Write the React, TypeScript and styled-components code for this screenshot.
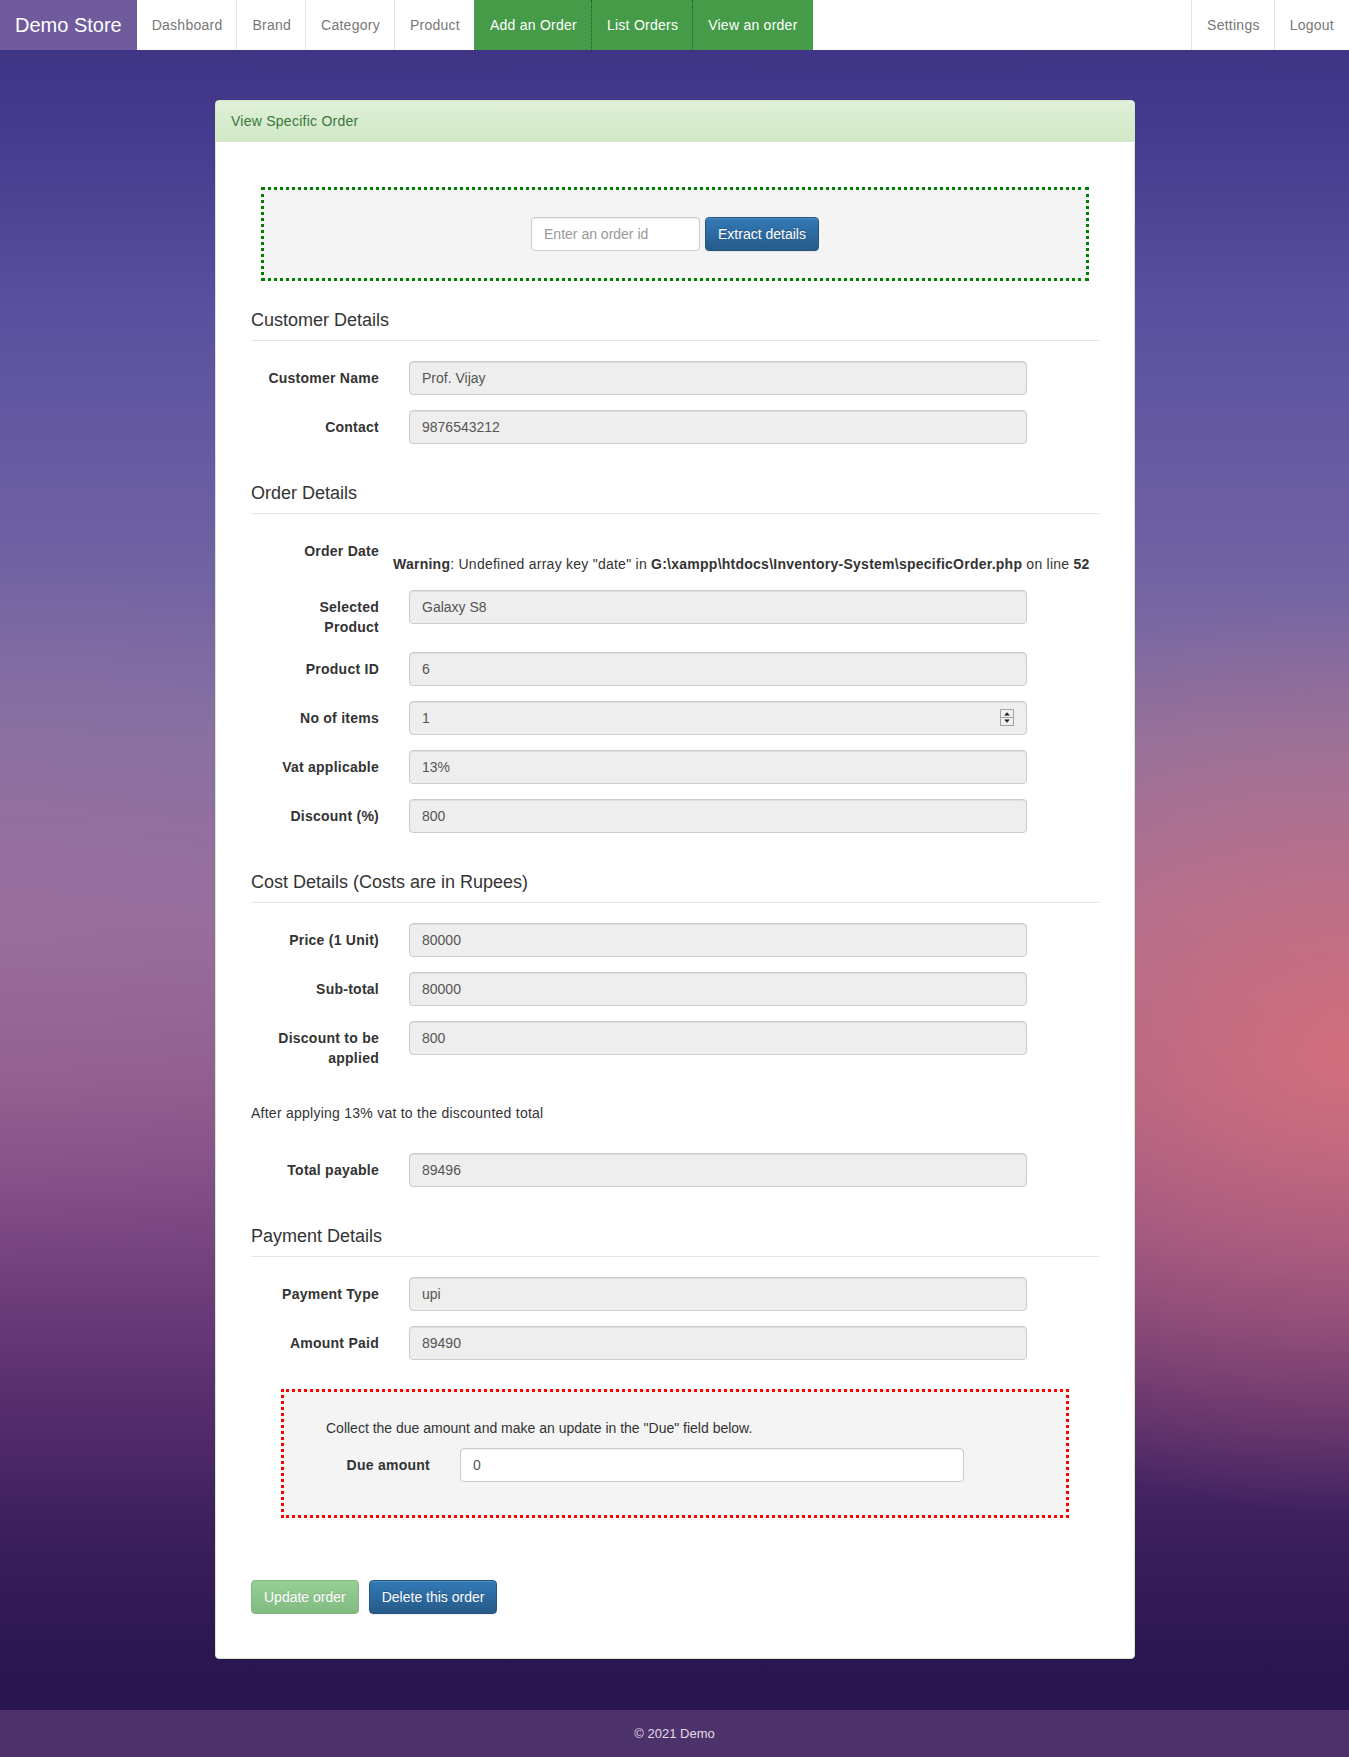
import React from "react";
import styled, { createGlobalStyle } from "styled-components";

const GlobalStyle = createGlobalStyle`
    * {
        box-sizing: border-box;
    }

    body {
        margin: 0;
        font-family: "Liberation Sans", Arial, Helvetica, sans-serif;
        font-size: 14px;
        line-height: 1.42857;
        letter-spacing: 0.25px;
        color: #333;
    }
`;

const Page = styled.div`
    min-height: 100vh;
    display: flex;
    flex-direction: column;
    background:
        radial-gradient(ellipse 48% 26% at 100% 60%, rgba(214, 112, 124, 0.95), rgba(214, 112, 124, 0) 100%),
        radial-gradient(ellipse 40% 20% at 0% 52%, rgba(160, 110, 160, 0.45), rgba(160, 110, 160, 0) 100%),
        linear-gradient(
            to bottom,
            #3b3080 0%,
            #463c8e 8%,
            #5a519f 18%,
            #6d5fa3 30%,
            #8571a2 42%,
            #946e9c 52%,
            #8e5a8c 62%,
            #7a4682 70%,
            #5a2f6e 79%,
            #3c1f5e 87%,
            #2a1650 95%,
            #281550 100%
        );
`;

const NavBar = styled.nav`
    display: flex;
    justify-content: space-between;
    height: 50px;
    background-color: #fff;
`;

const NavGroup = styled.ul`
    display: flex;
    list-style: none;
    margin: 0;
    padding: 0;
`;

const Brand = styled.a`
    display: block;
    padding: 13px 15px;
    height: 50px;
    font-size: 20px;
    line-height: 24px;
    letter-spacing: 0;
    color: #fff;
    background-color: #6e5a9c;
    text-decoration: none;
`;

const NavItem = styled.li<{ $active?: boolean; $sep?: "none" | "solid" | "dotted" }>`
    padding: 15px;
    line-height: 20px;
    font-size: 14px;
    color: ${(p) => (p.$active ? "#fff" : "#777")};
    background-color: ${(p) => (p.$active ? "#469b48" : "transparent")};
    border-left: 1px
        ${(p) =>
            p.$sep === "dotted"
                ? "dotted #1f5a22"
                : p.$sep === "solid"
                ? "solid #e3e3e3"
                : "solid transparent"};
    margin-left: -1px;
    cursor: pointer;
`;

const Main = styled.main`
    flex: 1;
    padding: 50px 0 51px;
`;

const Panel = styled.section`
    width: 920px;
    margin: 0 0 0 215px;
    background-color: #fff;
    border: 1px solid #d6e9c6;
    border-radius: 4px;
    box-shadow: 0 1px 2px rgba(0, 0, 0, 0.05);
`;

const PanelHeading = styled.div`
    padding: 10px 15px;
    line-height: 20px;
    color: #3c763d;
    background-image: linear-gradient(to bottom, #dff0d8 0%, #d0e9c6 100%);
    border-bottom: 1px solid #d6e9c6;
    border-radius: 3px 3px 0 0;
`;

const PanelBody = styled.div`
    padding: 45px 35px 44px;
`;

const SearchBox = styled.div`
    display: flex;
    justify-content: center;
    gap: 5px;
    margin: 0 10px;
    padding: 27px 0;
    background-color: #f4f4f4;
    border: 3px dotted #008000;
`;

const SearchInput = styled.input`
    width: 169px;
    height: 34px;
    padding: 6px 12px;
    font: inherit;
    color: #555;
    background-color: #fff;
    border: 1px solid #ccc;
    border-radius: 4px;
    box-shadow: inset 0 1px 1px rgba(0, 0, 0, 0.075);

    &::placeholder {
        color: #999;
    }
`;

const Button = styled.button<{ $variant: "primary" | "success" }>`
    height: 34px;
    padding: 6px 12px;
    font: inherit;
    line-height: 20px;
    color: #fff;
    border-radius: 4px;
    border: 1px solid ${(p) => (p.$variant === "primary" ? "#245580" : "#3e8f3e")};
    background-image: ${(p) =>
        p.$variant === "primary"
            ? "linear-gradient(to bottom, #337ab7 0%, #265a88 100%)"
            : "linear-gradient(to bottom, #5cb85c 0%, #419641 100%)"};
    box-shadow: inset 0 1px 0 rgba(255, 255, 255, 0.15), 0 1px 1px rgba(0, 0, 0, 0.075);
    text-shadow: 0 -1px 0 rgba(0, 0, 0, 0.2);
    cursor: pointer;

    &:disabled {
        opacity: 0.65;
        box-shadow: none;
        cursor: not-allowed;
    }
`;

const SectionTitle = styled.h4<{ $first?: boolean }>`
    margin: ${(p) => (p.$first ? "29px" : "39px")} 0 20px;
    padding-bottom: 10px;
    font-size: 18px;
    font-weight: normal;
    line-height: 20px;
    letter-spacing: 0;
    color: #333;
    border-bottom: 1px solid #e5e5e5;
`;

const FieldRow = styled.div`
    display: grid;
    grid-template-columns: 128px 618px;
    column-gap: 30px;
    align-items: start;
    margin-bottom: 15px;
`;

const FieldLabel = styled.label`
    padding: 7px 0 0 14px;
    font-weight: bold;
    text-align: right;
    line-height: 20px;
`;

const FieldBox = styled.div`
    position: relative;
`;

const FieldInput = styled.input<{ $plain?: boolean }>`
    display: block;
    width: 100%;
    height: 34px;
    padding: 6px 12px;
    font: inherit;
    line-height: 20px;
    color: #555;
    background-color: ${(p) => (p.$plain ? "#fff" : "#eee")};
    border: 1px solid #ccc;
    border-radius: 4px;
    box-shadow: inset 0 1px 1px rgba(0, 0, 0, 0.075);
    outline: none;
`;

const Spinner = styled.svg`
    position: absolute;
    top: 8px;
    right: 13px;
`;

const Warning = styled.div`
    margin-left: -16px;
    padding-bottom: 1px;
    white-space: nowrap;
    line-height: 20px;
`;

const Note = styled.p`
    margin: 35px 0 30px;
    line-height: 20px;
`;

const DueBox = styled.div`
    margin: 29px 30px 0;
    padding: 26px 0 33px 42px;
    background-color: #f4f4f4;
    border: 3px dotted #ff0000;
`;

const DueText = styled.p`
    margin: 0 0 10px;
    line-height: 20px;
    letter-spacing: 0;
`;

const DueRow = styled.div`
    display: grid;
    grid-template-columns: 104px 504px;
    column-gap: 30px;
    align-items: start;
`;

const Actions = styled.div`
    display: flex;
    gap: 10px;
    margin-top: 62px;
`;

const Footer = styled.footer`
    height: 48px;
    line-height: 48px;
    text-align: center;
    font-size: 13px;
    letter-spacing: 0;
    color: #e2dcea;
    background-color: #4e326b;
`;

type Field = { label: string; value: string; spinner?: boolean };

const customer: Field[] = [
    { label: "Customer Name", value: "Prof. Vijay" },
    { label: "Contact", value: "9876543212" },
];

const order: Field[] = [
    { label: "Selected Product", value: "Galaxy S8" },
    { label: "Product ID", value: "6" },
    { label: "No of items", value: "1", spinner: true },
    { label: "Vat applicable", value: "13%" },
    { label: "Discount (%)", value: "800" },
];

const cost: Field[] = [
    { label: "Price (1 Unit)", value: "80000" },
    { label: "Sub-total", value: "80000" },
    { label: "Discount to be applied", value: "800" },
];

const payment: Field[] = [
    { label: "Payment Type", value: "upi" },
    { label: "Amount Paid", value: "89490" },
];

const SpinButtons = () => (
    <Spinner width="14" height="17" viewBox="0 0 14 17">
        <rect x="0.5" y="0.5" width="13" height="16" fill="#efefef" stroke="#a3a3a3" />
        <line x1="0.5" y1="8.5" x2="13.5" y2="8.5" stroke="#a3a3a3" />
        <path d="M7 3.2 L9.8 6.4 L4.2 6.4 Z" fill="#1f1f1f" />
        <path d="M7 13.8 L9.8 10.6 L4.2 10.6 Z" fill="#1f1f1f" />
    </Spinner>
);

const Fields = ({ items }: { items: Field[] }) => (
    <>
        {items.map((f) => (
            <FieldRow key={f.label}>
                <FieldLabel>{f.label}</FieldLabel>
                <FieldBox>
                    <FieldInput readOnly value={f.value} />
                    {f.spinner && <SpinButtons />}
                </FieldBox>
            </FieldRow>
        ))}
    </>
);

export default function App() {
    return (
        <Page>
            <GlobalStyle />
            <NavBar>
                <NavGroup>
                    <li>
                        <Brand href="#">Demo Store</Brand>
                    </li>
                    <NavItem $sep="none">Dashboard</NavItem>
                    <NavItem $sep="solid">Brand</NavItem>
                    <NavItem $sep="solid">Category</NavItem>
                    <NavItem $sep="solid">Product</NavItem>
                    <NavItem $active $sep="none">Add an Order</NavItem>
                    <NavItem $active $sep="dotted">List Orders</NavItem>
                    <NavItem $active $sep="dotted">View an order</NavItem>
                </NavGroup>
                <NavGroup>
                    <NavItem $sep="solid">Settings</NavItem>
                    <NavItem $sep="solid">Logout</NavItem>
                </NavGroup>
            </NavBar>

            <Main>
                <Panel>
                    <PanelHeading>View Specific Order</PanelHeading>
                    <PanelBody>
                        <SearchBox>
                            <SearchInput placeholder="Enter an order id" />
                            <Button $variant="primary">Extract details</Button>
                        </SearchBox>

                        <SectionTitle $first>Customer Details</SectionTitle>
                        <Fields items={customer} />

                        <SectionTitle>Order Details</SectionTitle>
                        <FieldRow>
                            <FieldLabel>Order Date</FieldLabel>
                            <Warning>
                                <br />
                                <b>Warning</b>: Undefined array key "date" in{" "}
                                <b>G:\xampp\htdocs\Inventory-System\specificOrder.php</b> on line <b>52</b>
                            </Warning>
                        </FieldRow>
                        <Fields items={order} />

                        <SectionTitle>Cost Details (Costs are in Rupees)</SectionTitle>
                        <Fields items={cost} />
                        <Note>After applying 13% vat to the discounted total</Note>
                        <Fields items={[{ label: "Total payable", value: "89496" }]} />

                        <SectionTitle>Payment Details</SectionTitle>
                        <Fields items={payment} />

                        <DueBox>
                            <DueText>Collect the due amount and make an update in the "Due" field below.</DueText>
                            <DueRow>
                                <FieldLabel>Due amount</FieldLabel>
                                <FieldInput $plain defaultValue="0" />
                            </DueRow>
                        </DueBox>

                        <Actions>
                            <Button $variant="success" disabled>
                                Update order
                            </Button>
                            <Button $variant="primary">Delete this order</Button>
                        </Actions>
                    </PanelBody>
                </Panel>
            </Main>

            <Footer>© 2021 Demo</Footer>
        </Page>
    );
}
